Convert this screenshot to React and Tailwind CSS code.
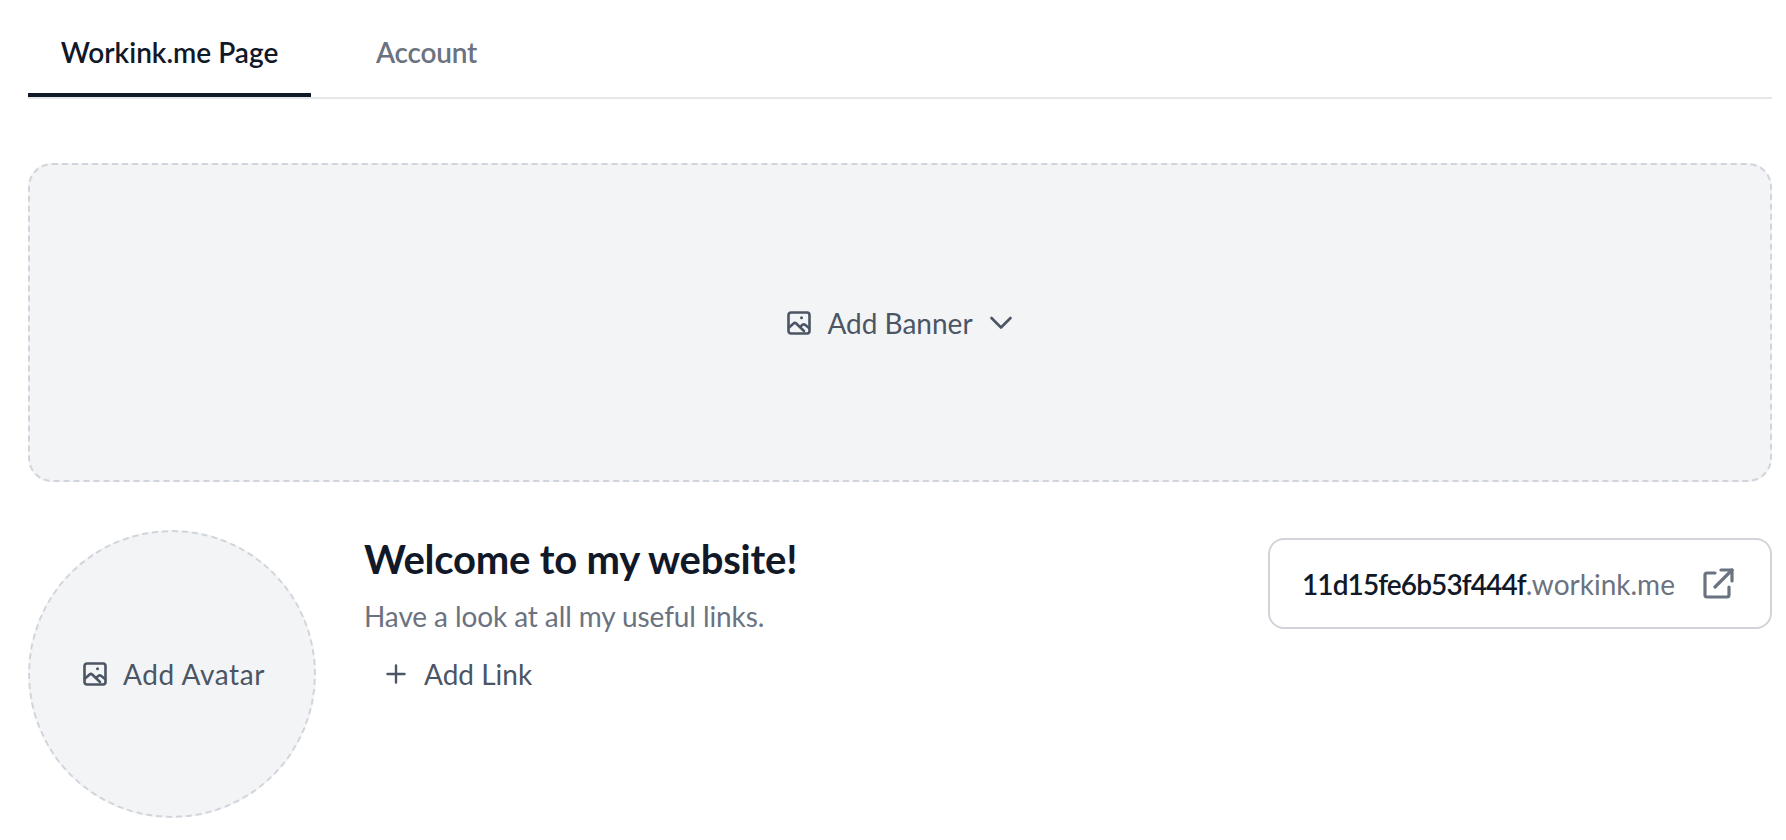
function PhotoIcon() {
  return (
    <svg width="24" height="24" viewBox="0 0 24 24" fill="none" stroke="currentColor" strokeWidth="2.6" strokeLinecap="round" strokeLinejoin="round" className="flex-shrink-0">
      <rect x="1.5" y="1.5" width="21" height="21" rx="2.5" />
      <path d="M2 16.5l4.6-4a2 2 0 0 1 2.6 0L17 20" />
      <path d="M14 15l1.6-1.2a2 2 0 0 1 2.4 0L22 17" />
      <circle cx="14.5" cy="6.8" r="1.5" fill="currentColor" stroke="none" />
    </svg>
  )
}

function ChevronIcon() {
  return (
    <svg width="24" height="24" viewBox="0 0 24 24" fill="none" stroke="currentColor" strokeWidth="2.6" strokeLinecap="round" strokeLinejoin="round" className="flex-shrink-0">
      <path d="M2.5 7l9.5 9.5L21.5 7" />
    </svg>
  )
}

function PlusIcon() {
  return (
    <svg width="24" height="24" viewBox="0 0 24 24" fill="none" stroke="currentColor" strokeWidth="2.4" strokeLinecap="round" className="flex-shrink-0">
      <path d="M12 3.5v17M3.5 12h17" />
    </svg>
  )
}

function ExternalIcon() {
  return (
    <svg width="32" height="32" viewBox="0 0 32 32" fill="none" stroke="currentColor" strokeWidth="3.2" strokeLinecap="round" strokeLinejoin="round">
      <path d="M13 5H5a2 2 0 0 0-2 2v20a2 2 0 0 0 2 2h20a2 2 0 0 0 2-2v-8" />
      <path d="M19 2h11v11" />
      <path d="M30 2L13 19" />
    </svg>
  )
}

export default function App() {
  return (
    <div className="bg-white min-h-screen pl-[28px] pr-[14px] text-[#111827] font-['Lato','Liberation_Sans',sans-serif]">
      {/* Tabs */}
      <div className="flex border-b-2 border-[#e5e7eb] h-[99px]">
        <button className="w-[283px] h-[97px] border-b-4 border-[#111827] text-[28px] font-semibold text-[#111827] flex items-center justify-center pt-[10px]">
          Workink.me Page
        </button>
        <button className="ml-[65px] h-[97px] text-[28px] font-semibold tracking-[-0.25px] text-[#6b7280] flex items-center pt-[10px] pb-[4px]">
          Account
        </button>
      </div>

      {/* Banner */}
      <div className="mt-[64px] h-[319px] bg-[#f3f4f6] border-2 border-dashed border-[#d1d5db] rounded-[24px] flex items-center justify-center gap-4 text-[#4b5563]">
        <PhotoIcon />
        <span className="text-[28px]">Add Banner</span>
        <ChevronIcon />
      </div>

      {/* Profile row */}
      <div className="mt-[48px] flex items-start">
        <div className="w-[288px] h-[288px] rounded-full bg-[#f3f4f6] border-2 border-dashed border-[#d1d5db] flex items-center justify-center gap-4 pl-[4px] text-[#4b5563] flex-shrink-0">
          <PhotoIcon />
          <span className="text-[28px] tracking-[0.6px]">Add Avatar</span>
        </div>

        <div className="ml-[48px] pt-[2px] flex-1 flex flex-col items-start">
          <h1 className="text-[40px] font-bold leading-[54px] tracking-[-0.2px] text-[#111827]">Welcome to my website!</h1>
          <p className="mt-[9px] text-[28px] leading-[42px] tracking-[-0.1px] text-[#6b7280]">Have a look at all my useful links.</p>
          <button className="mt-[13px] ml-[20px] flex items-center gap-4 text-[28px] text-[#4b5563] leading-[48px]">
            <PlusIcon />
            Add Link
          </button>
        </div>

        <div className="mt-[8px] w-[504px] h-[91px] border-2 border-[#d1d5db] rounded-[16px] flex items-center justify-between pl-[32px] pr-[36px] flex-shrink-0">
          <span className="text-[28px]">
            <span className="font-semibold tracking-[-0.9px] text-[#111827]">11d15fe6b53f444f</span>
            <span className="text-[#6b7280]">.workink.me</span>
          </span>
          <span className="text-[#6b7280]"><ExternalIcon /></span>
        </div>
      </div>
    </div>
  )
}
